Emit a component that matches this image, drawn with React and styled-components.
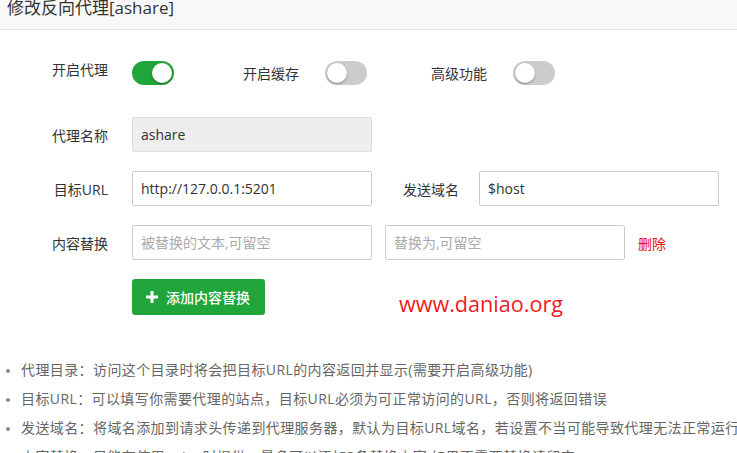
import React from "react";
import styled, { createGlobalStyle } from "styled-components";

const GlobalStyle = createGlobalStyle`
  html, body {
    margin: 0;
    padding: 0;
    background: #fff;
    overflow: hidden;
  }
  body {
    font-family: "Open Sans", "Noto Sans CJK SC", sans-serif;
    color: #333;
  }
`;

const tips = [
  "代理目录：访问这个目录时将会把目标URL的内容返回并显示(需要开启高级功能)",
  "目标URL：可以填写你需要代理的站点，目标URL必须为可正常访问的URL，否则将返回错误",
  "发送域名：将域名添加到请求头传递到代理服务器，默认为目标URL域名，若设置不当可能导致代理无法正常运行",
  "内容替换：只能在使用nginx时提供，最多可以添加3条替换内容,如果不需要替换请留空",
];

const App = () => {
  return (
    <Page>
      <GlobalStyle />
      <Header>
        <Title>修改反向代理[ashare]</Title>
      </Header>
      <Form>
        <SwitchRow>
          <Label $raise>开启代理</Label>
          <Toggle $on />
          <SwitchGroup $gap={69}>
            <InlineLabel>开启缓存</InlineLabel>
            <Toggle />
          </SwitchGroup>
          <SwitchGroup $gap={64}>
            <InlineLabel>高级功能</InlineLabel>
            <Toggle />
          </SwitchGroup>
        </SwitchRow>
        <Row>
          <Label>代理名称</Label>
          <Input value="ashare" disabled readOnly />
        </Row>
        <Row>
          <Label>目标URL</Label>
          <Input defaultValue="http://127.0.0.1:5201" />
          <InlineLabel $wide>发送域名</InlineLabel>
          <Input defaultValue="$host" />
        </Row>
        <Row>
          <Label>内容替换</Label>
          <Input placeholder="被替换的文本,可留空" />
          <Input placeholder="替换为,可留空" $ml={13} />
          <Delete>删除</Delete>
        </Row>
        <ButtonRow>
          <AddButton>
            <svg width="12" height="12" viewBox="0 0 12 12">
              <path d="M4.5 0h3v4.5H12v3H7.5V12h-3V7.5H0v-3h4.5z" fill="#fff" />
            </svg>
            添加内容替换
          </AddButton>
          <Watermark>www.daniao.org</Watermark>
        </ButtonRow>
      </Form>
      <Tips>
        {tips.map((t) => (
          <Tip key={t}>{t}</Tip>
        ))}
      </Tips>
    </Page>
  );
};

const Page = styled.div`
  width: 737px;
  height: 453px;
  overflow: hidden;
`;

const Header = styled.div`
  height: 31px;
  background: #f8f8f8;
  border-bottom: 1px solid #e6e6e6;
  box-sizing: border-box;
  padding-left: 7px;
`;

const Title = styled.div`
  font-size: 17px;
  line-height: 17px;
  color: #333;
  margin-top: -1px;
`;

const Form = styled.div`
  padding: 31px 0 0 30px;
`;

const Row = styled.div`
  display: flex;
  align-items: center;
  height: 35px;
  margin-bottom: 19px;
`;

const SwitchRow = styled(Row)`
  height: 24px;
  margin-bottom: 32px;
`;

const Label = styled.div`
  width: 78px;
  margin-right: 24px;
  text-align: right;
  font-size: 14px;
  color: #333;
  white-space: nowrap;
  position: relative;
  top: ${(p) => (p.$raise ? "-4px" : "0")};
`;

const InlineLabel = styled.div`
  font-size: 14px;
  color: #333;
  white-space: nowrap;
  margin-left: ${(p) => (p.$wide ? "31px" : "0")};
  margin-right: ${(p) => (p.$wide ? "20px" : "26px")};
`;

const SwitchGroup = styled.div`
  display: flex;
  align-items: center;
  margin-left: ${(p) => p.$gap}px;
`;

const Toggle = styled.div`
  position: relative;
  width: 42px;
  height: 24px;
  border-radius: 12px;
  background: ${(p) => (p.$on ? "#20a53a" : "#cccccc")};
  flex-shrink: 0;

  &::after {
    content: "";
    position: absolute;
    top: 2px;
    left: ${(p) => (p.$on ? "20px" : "2px")};
    width: 20px;
    height: 20px;
    border-radius: 50%;
    background: #fff;
    box-shadow: 0 1px 2px rgba(0, 0, 0, 0.35);
  }
`;

const Input = styled.input`
  box-sizing: border-box;
  width: 240px;
  height: 35px;
  margin-left: ${(p) => (p.$ml ? `${p.$ml}px` : "0")};
  padding: 0 8px;
  border: 1px solid #ccc;
  border-radius: 2px;
  font-family: "Open Sans", "Noto Sans CJK SC", sans-serif;
  font-size: 14px;
  color: #333;
  background: #fff;
  outline: none;

  &:disabled {
    background: #eeeeee;
    border-color: #dcdce6;
    color: #333;
  }

  &::placeholder {
    color: #aaa;
  }
`;

const Delete = styled.span`
  margin-left: 13px;
  font-size: 14px;
  color: #ef0808;
`;

const ButtonRow = styled.div`
  position: relative;
  display: flex;
  padding-left: 102px;
`;

const AddButton = styled.button`
  display: flex;
  align-items: center;
  gap: 8px;
  height: 36px;
  width: 133px;
  padding: 0 0 0 14px;
  border: none;
  border-radius: 3px;
  background: #20a53a;
  color: #fff;
  font-family: "Noto Sans CJK SC", sans-serif;
  font-size: 14px;
  font-weight: 500;
`;

const Watermark = styled.div`
  position: absolute;
  left: 369px;
  top: 10px;
  font-family: "Open Sans", sans-serif;
  font-size: 21.6px;
  color: #f01a24;
`;

const Tips = styled.ul`
  margin: 40px 0 0;
  padding: 0 0 0 21px;
`;

const Tip = styled.li`
  font-size: 14px;
  line-height: 29px;
  color: #666;
  white-space: nowrap;
  letter-spacing: 0.4px;

  &::marker {
    color: #888;
    font-size: 11px;
  }
`;

export default App;
